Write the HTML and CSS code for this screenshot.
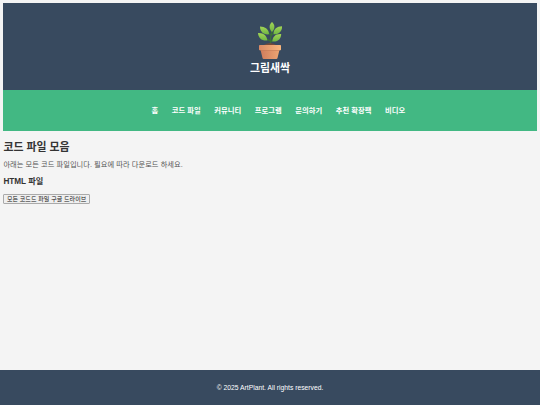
FILE: index.html
```html
<!DOCTYPE html>
<html lang="ko">
<head>
    <meta charset="UTF-8">
    <meta name="viewport" content="width=device-width, initial-scale=1.0">
    <title>그림새싹</title>
    <link rel="stylesheet" href="styles.css">
</head>
<body>
    <header>
        <svg class="logo" viewBox="0 0 40 40">
            <defs>
                <linearGradient id="pot" x1="0" x2="1" y1="0" y2="0">
                    <stop offset="0" stop-color="#cf7c5c"/>
                    <stop offset="1" stop-color="#eda673"/>
                </linearGradient>
                <linearGradient id="rim" x1="0" x2="1" y1="0" y2="0">
                    <stop offset="0" stop-color="#d98a66"/>
                    <stop offset="1" stop-color="#f9b67c"/>
                </linearGradient>
                <linearGradient id="leaf" x1="0" x2="0" y1="0" y2="1">
                    <stop offset="0" stop-color="#a3d555"/>
                    <stop offset="1" stop-color="#6fb544"/>
                </linearGradient>
            </defs>
            <path d="M20.5 25Q20 18 22 10M20.6 21Q18 20 15.5 18.5M20.6 22Q22 21 24 19.5M21 15Q19 14 17.5 12.5M21 15.5Q23 14.5 24.5 12" fill="none" stroke="#3b7136" stroke-width="1.3"/>
            <g fill="url(#leaf)">
                <path d="M22 12C18.6 8.5 19 4.5 22 2C25 4.5 25.4 8.5 22 12Z"/>
                <path d="M19 14.3C13.5 15 10 11.8 10 6.5C15 6.5 19 9.3 19 14.3Z"/>
                <path d="M23.6 14.3C23.3 9 27 6.3 32 6.3C32.5 11.3 28.5 14.8 23.6 14.3Z"/>
                <path d="M17.3 20.5C12 21.2 8.3 18 8 13C13.5 12.6 17 15.6 17.3 20.5Z"/>
                <path d="M22.3 21.4C22.7 16.3 26 13.5 31.2 14C31.2 19 27.7 22.2 22.3 21.4Z"/>
            </g>
            <path d="M13 25.5Q20 20.5 27 25.5Z" fill="#744b3a"/>
            <path d="M10.3 29H29.7L27.5 38Q27.3 39 26.3 39H13.7Q12.7 39 12.5 38Z" fill="url(#pot)"/>
            <path d="M10.8 30H29.2V30.7H10.8Z" fill="#bd7250"/>
            <rect x="9" y="25" width="22" height="5.2" rx="0.7" fill="url(#rim)"/>
        </svg>
        <h1>그림새싹</h1>
    </header>
    <nav>
        <ul>
            <li><a>홈</a></li>
            <li><a>코드 파일</a></li>
            <li><a>커뮤니티</a></li>
            <li><a>프로그램</a></li>
            <li><a>문의하기</a></li>
            <li><a>추천 확장팩</a></li>
            <li><a>비디오</a></li>
        </ul>
    </nav>
    <main>
        <h2>코드 파일 모음</h2>
        <p>아래는 모든 코드 파일입니다. 필요에 따라 다운로드 하세요.</p>
        <h3>HTML 파일</h3>
        <button type="button">모든 코드드 파일 구글 드라이브</button>
    </main>
    <footer>
        <p>© 2025 ArtPlant. All rights reserved.</p>
    </footer>
</body>
</html>
```
FILE: styles.css
```css
body {
    font-family: "Liberation Sans", "Noto Sans CJK KR", sans-serif;
    font-size: 6.75px;
    line-height: 10.8px;
    background-color: #f4f4f4;
    color: #333;
    margin: 3.375px;
}

header {
    box-sizing: border-box;
    height: 87px;
    padding-top: 17px;
    background-color: #384a5f;
    color: #fff;
    text-align: center;
}

.logo {
    display: block;
    width: 40px;
    height: 40px;
    margin: 0 auto;
}

h1 {
    margin: 0;
    font-size: 10.9px;
    line-height: 17px;
}

nav {
    box-sizing: border-box;
    display: flex;
    justify-content: center;
    align-items: center;
    height: 41px;
    padding-top: 1px;
    background-color: #42b883;
}

ul {
    display: flex;
    gap: 13.5px;
    list-style: none;
    margin: 0;
    padding: 0 0 0 16.875px;
}

a {
    color: #fff;
    font-size: 7.3px;
    font-weight: bold;
    letter-spacing: 0.03px;
}

h2 {
    margin: 8px 0 5px;
    font-size: 10.9px;
    line-height: 16px;
}

main p {
    margin: 0 0 5px;
    color: #555;
    font-size: 7.22px;
    letter-spacing: 0.06px;
}

h3 {
    margin: 0 0 6px;
    font-size: 8.2px;
    line-height: 12px;
}

button {
    display: block;
    box-sizing: border-box;
    width: 86.5px;
    height: 10px;
    padding: 0;
    border: 1px solid #aaa;
    border-radius: 1px;
    background-color: #efefef;
    color: #111;
    font-family: inherit;
    font-size: 6px;
    line-height: 8px;
    letter-spacing: 0.06px;
    white-space: nowrap;
}

footer {
    box-sizing: border-box;
    position: fixed;
    left: 0;
    right: 0;
    bottom: 0;
    display: flex;
    justify-content: center;
    align-items: center;
    height: 35px;
    padding-top: 1px;
    background-color: #384a5f;
    color: #fff;
}

footer p {
    margin: 0;
}
```
